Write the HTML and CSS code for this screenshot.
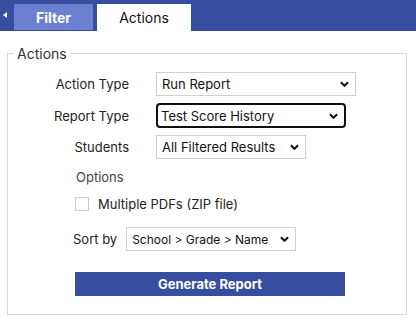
FILE: index.html
```html
<!DOCTYPE html>
<html lang="en">

<head>
    <meta charset="UTF-8">
    <meta name="viewport" content="width=device-width, initial-scale=1.0">
    <title>Actions</title>
    <link rel="stylesheet" href="styles.css">
</head>

<body>
    <div class="topbar">
        <div class="collapse"><span class="arrow"></span></div>
        <div class="tab tab-filter">Filter</div>
        <div class="tab tab-active">Actions</div>
    </div>

    <fieldset class="panel">
        <legend>Actions</legend>

        <div class="row">
            <label class="label">Action Type</label>
            <div class="select-wrap w-action">
                <select class="select">
                    <option>Run Report</option>
                </select>
                <svg class="chev" viewBox="0 0 10 6"><path d="M1 1l4 4 4-4" /></svg>
            </div>
        </div>

        <div class="row">
            <label class="label">Report Type</label>
            <div class="select-wrap w-report focused">
                <select class="select">
                    <option>Test Score History</option>
                </select>
                <svg class="chev" viewBox="0 0 10 6"><path d="M1 1l4 4 4-4" /></svg>
            </div>
        </div>

        <div class="row">
            <label class="label">Students</label>
            <div class="select-wrap w-students">
                <select class="select">
                    <option>All Filtered Results</option>
                </select>
                <svg class="chev" viewBox="0 0 10 6"><path d="M1 1l4 4 4-4" /></svg>
            </div>
        </div>

        <div class="options">
            <div class="options-title">Options</div>
            <label class="check-row">
                <span class="checkbox"></span>
                Multiple PDFs (ZIP file)
            </label>
            <div class="sort-row">
                <span class="sort-label">Sort by</span>
                <div class="select-wrap w-sort">
                    <select class="select">
                        <option>School &gt; Grade &gt; Name</option>
                    </select>
                    <svg class="chev" viewBox="0 0 10 6"><path d="M1 1l4 4 4-4" /></svg>
                </div>
            </div>
        </div>

        <button class="generate">Generate Report</button>
    </fieldset>
</body>

</html>
```

FILE: styles.css
```css
body {
    font-family: Inter, "DejaVu Sans", sans-serif;
    font-size: 13px;
    color: #222;
    background-color: #fff;
    margin: 0;
    padding: 0;
}

.topbar {
    height: 31px;
    background-color: #374ea0;
    display: flex;
    align-items: flex-end;
}

.collapse {
    width: 14px;
    height: 31px;
    display: flex;
    align-items: center;
    padding-left: 3px;
    box-sizing: border-box;
}

.arrow {
    width: 0;
    height: 0;
    border-top: 3px solid transparent;
    border-bottom: 3px solid transparent;
    border-right: 4px solid #fff;
    margin-top: -2px;
}

.tab {
    display: flex;
    align-items: center;
    justify-content: center;
    font-size: 14px;
}

.tab-filter {
    width: 79px;
    height: 26px;
    margin-bottom: 1px;
    margin-right: 4px;
    background-color: #6b80d1;
    color: #fff;
    font-weight: bold;
}

.tab-active {
    width: 94px;
    height: 27px;
    background-color: #fff;
    color: #111;
}

.panel {
    margin: 14px 9px 0 7px;
    padding: 10px 0 15px 0;
    border: 1px solid #d6d6d6;
    height: 270px;
    box-sizing: border-box;
}

.panel legend {
    font-size: 14px;
    color: #333;
    padding: 0 3px;
    margin-left: 6px;
}

.row {
    display: flex;
    align-items: center;
    margin-bottom: 7px;
}

.label {
    width: 121px;
    text-align: right;
    margin-right: 27px;
    color: #222;
}

.select-wrap {
    position: relative;
    height: 24px;
    border: 1px solid #d0d0d0;
    box-sizing: border-box;
    background-color: #fff;
}

.select-wrap.focused {
    border: 2px solid #111;
    border-radius: 4px;
    height: 25px;
}

.select {
    appearance: none;
    -webkit-appearance: none;
    border: none;
    outline: none;
    background: transparent;
    font-family: inherit;
    font-size: 13px;
    color: #111;
    width: 100%;
    height: 100%;
    padding: 0 0 0 5px;
}

.focused .select {
    padding-left: 3px;
}

.chev {
    position: absolute;
    right: 6px;
    top: 50%;
    width: 9px;
    height: 6px;
    margin-top: -3px;
    fill: none;
    stroke: #111;
    stroke-width: 2.2;
}

.w-action {
    width: 200px;
}

.w-report {
    width: 190px;
}

.w-students {
    width: 150px;
}

.w-sort {
    width: 170px;
}

.w-sort .select {
    font-size: 12px;
}

.options {
    padding-left: 65px;
    margin-top: 10px;
}

.options-title {
    color: #444;
    margin-left: 3px;
}

.check-row {
    display: flex;
    align-items: center;
    margin-top: 11px;
    margin-left: 2px;
    color: #222;
}

.checkbox {
    width: 12px;
    height: 12px;
    border: 1px solid #ccc;
    margin-right: 9px;
}

.sort-row {
    display: flex;
    align-items: center;
    margin-top: 15px;
}

.sort-label {
    margin-right: 9px;
}

.generate {
    display: block;
    width: 270px;
    height: 24px;
    margin: 21px 0 0 67px;
    border: none;
    background-color: #374ea0;
    color: #fff;
    font-family: inherit;
    font-size: 13px;
    font-weight: bold;
}
```
